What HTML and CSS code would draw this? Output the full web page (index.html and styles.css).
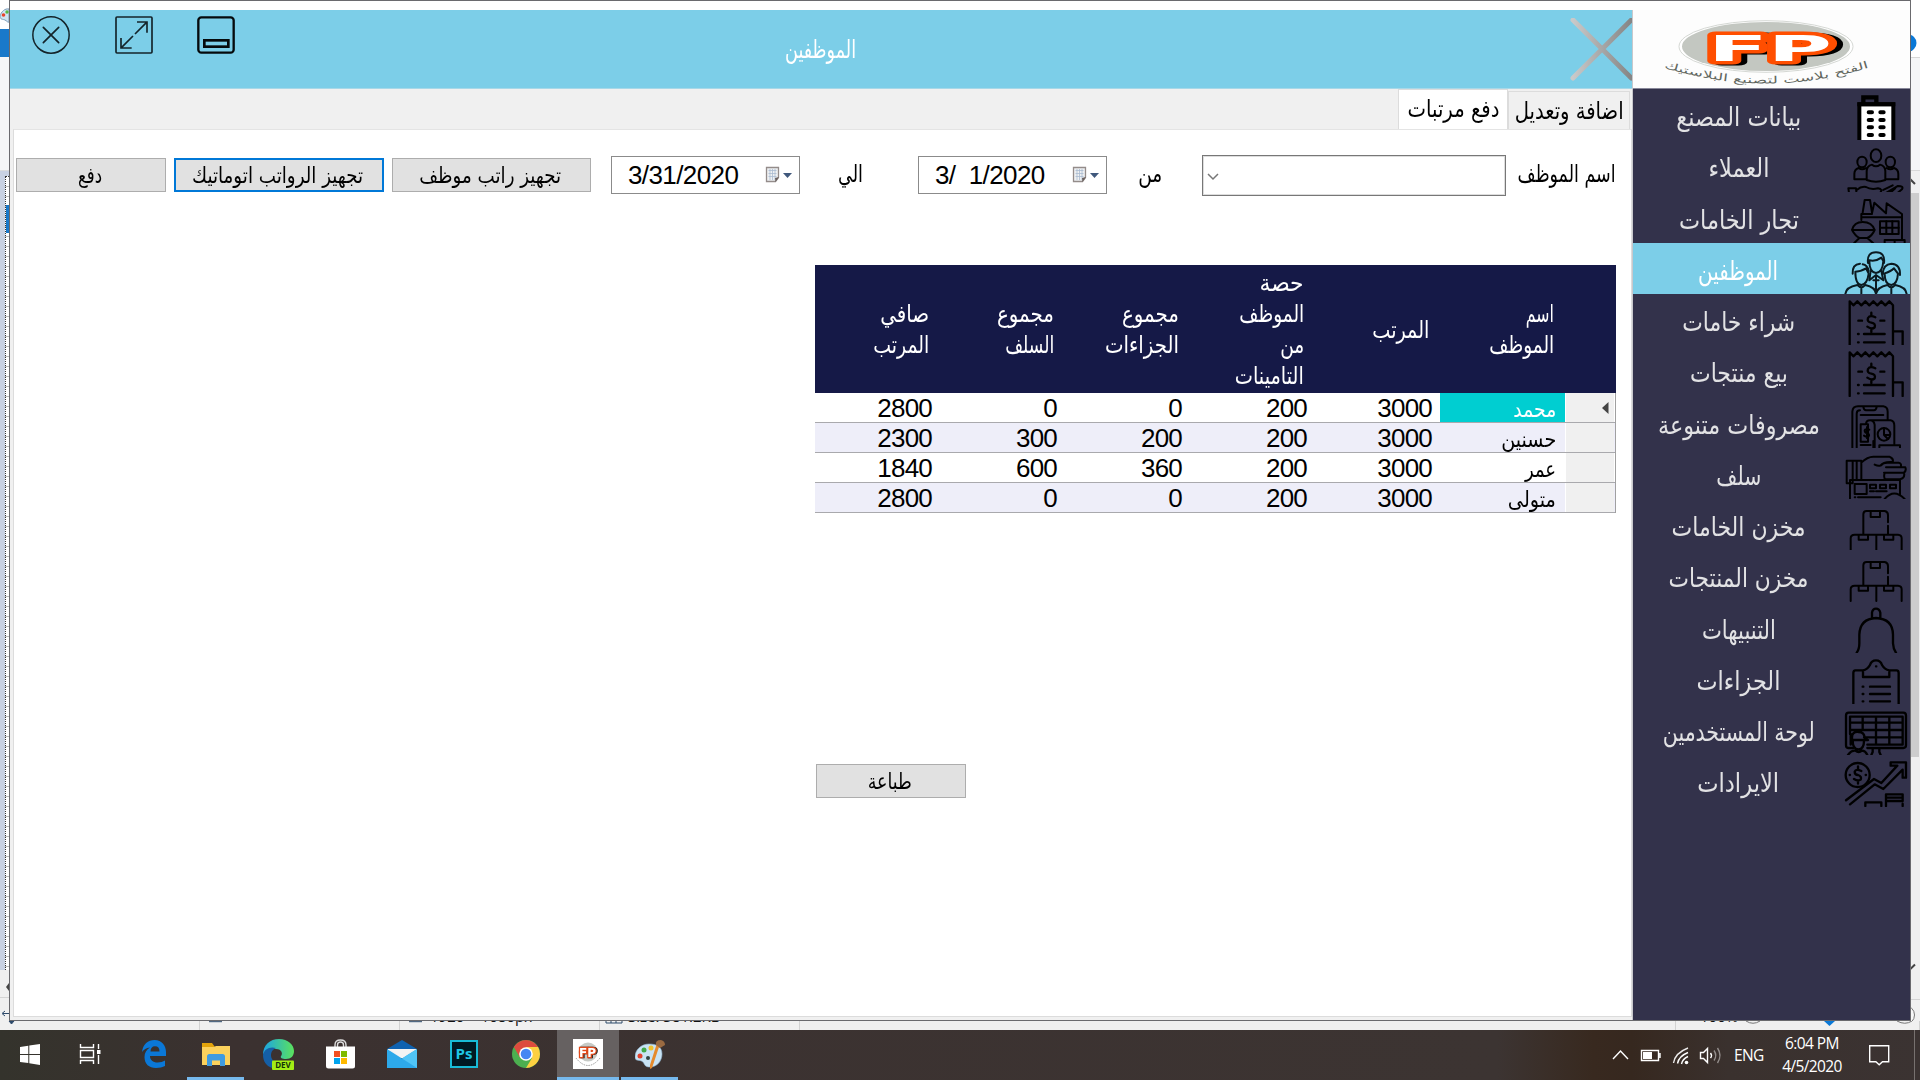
FILE: index.html
```html
<!DOCTYPE html>
<html lang="ar">
<head>
<meta charset="utf-8">
<title>الموظفين</title>
<link rel="stylesheet" href="styles.css">
</head>
<body>
<div class="desktop">
  <div class="sliver left">
    <div class="s-title"><svg width="9" height="28" viewBox="0 0 9 28"><path d="M9 9C5 8 1 12 0 16c0 4 3 3 5 4s3 3 4 2z" fill="#cfe4f2" stroke="#7d9cb8"/><circle cx="3.5" cy="15" r="1.8" fill="#e8442c"/><circle cx="7" cy="12" r="1.7" fill="#57b947"/></svg></div>
    <div class="s-file"></div>
    <div class="s-ribbon"></div>
    <div class="s-canvas"><div class="s-paper"><div class="s-paperblue"></div></div></div>
    <div class="s-foot"><svg width="9" height="51" viewBox="0 0 9 51"><path d="M6 17l3-4v8z" fill="#444"/><path d="M0 27.500h9" stroke="#d4d4d4"/><path d="M3 43.500h6M5 41l-3 2.500 3 2.500" stroke="#2d4a6b" fill="none"/></svg></div>
  </div>

  <div class="window">
    <div class="main">
      <header class="titlebar">
        <div class="winbtns">
          <svg width="38" height="38" viewBox="0 0 114 114"><circle cx="57" cy="57" r="54.500" fill="none" stroke="#14242a" stroke-width="4.500"/><path d="M34 34l46 46M80 34L34 80" stroke="#14242a" stroke-width="5" stroke-linecap="round"/></svg>
          <svg width="38" height="38" viewBox="0 0 114 114"><rect x="3" y="3" width="108" height="108" rx="3" fill="none" stroke="#14242a" stroke-width="5"/><path d="M66 18h30v32M94 20L60 54M18 66v30h32M20 94l34-34" fill="none" stroke="#14242a" stroke-width="5"/></svg>
          <svg width="38" height="38" viewBox="0 0 114 114"><rect x="4" y="4" width="106" height="106" rx="9" fill="none" stroke="#050a0c" stroke-width="7"/><rect x="22" y="73" width="72" height="19" fill="none" stroke="#050a0c" stroke-width="8"/></svg>
        </div>
        <h1 class="title"><span class="t" data-w="71">الموظفين</span></h1>
        <svg class="bigx" width="62" height="63" viewBox="0 0 186 189"><defs><linearGradient id="gx" x1="0" x2="1"><stop offset="0" stop-color="#c9c9c9"/><stop offset="1" stop-color="#858585"/></linearGradient></defs><path d="M9 6L184 180M184 6L9 180" stroke="url(#gx)" stroke-width="15" stroke-linecap="round"/></svg>
      </header>
      <div class="tabs">
        <div class="tab on"><span class="t" data-w="92">دفع مرتبات</span></div>
        <div class="tab"><span class="t" data-w="109">اضافة وتعديل</span></div>
      </div>
      <section class="page">
        <div class="toolbar">
          <button class="btn b-pay"><span class="t" data-w="24">دفع</span></button>
          <button class="btn b-auto"><span class="t" data-w="171">تجهيز الرواتب اتوماتيك</span></button>
          <button class="btn b-one"><span class="t" data-w="142">تجهيز راتب موظف</span></button>
          <div class="date"><span>3/31/2020</span>
            <svg width="28" height="18" viewBox="0 0 28 18"><path d="M1.500 1.500h12v10l-3 4h-9z" fill="#eef0f2" stroke="#948c8a" stroke-width="1.300"/><path d="M3.500 4.500h8M3.500 7.500h8M3.500 10.500h8M5 3v11M7.500 3v11M10 3v11" stroke="#aabbd0" stroke-width=".8"/><path d="M10 12l4-1-3.500 5z" fill="#6b6260"/><path d="M18 7h9l-4.500 5z" fill="#40587c"/></svg></div>
          <span class="lbl l-to"><span class="t" data-w="25">الي</span></span>
          <div class="date"><span>3/&nbsp; 1/2020</span>
            <svg width="28" height="18" viewBox="0 0 28 18"><path d="M1.500 1.500h12v10l-3 4h-9z" fill="#eef0f2" stroke="#948c8a" stroke-width="1.300"/><path d="M3.500 4.500h8M3.500 7.500h8M3.500 10.500h8M5 3v11M7.500 3v11M10 3v11" stroke="#aabbd0" stroke-width=".8"/><path d="M10 12l4-1-3.500 5z" fill="#6b6260"/><path d="M18 7h9l-4.500 5z" fill="#40587c"/></svg></div>
          <span class="lbl l-from"><span class="t" data-w="24">من</span></span>
          <div class="combo"><svg width="12" height="8" viewBox="0 0 12 8"><path d="M1 1l5 5 5-5" fill="none" stroke="#777" stroke-width="1.500"/></svg></div>
          <span class="lbl l-name"><span class="t" data-w="98">اسم الموظف</span></span>
        </div>

        <div class="grid">
          <div class="ghead">
            <div><span class="t" data-w="49">صافي</span><span class="t" data-w="56">المرتب</span></div>
            <div><span class="t" data-w="57">مجموع</span><span class="t" data-w="49">السلف</span></div>
            <div><span class="t" data-w="57">مجموع</span><span class="t" data-w="74">الجزاءات</span></div>
            <div><span class="t" data-w="44">حصة</span><span class="t" data-w="65">الموظف</span><span class="t" data-w="24">من</span><span class="t" data-w="69">التامينات</span></div>
            <div><span class="t" data-w="57">المرتب</span></div>
            <div><span class="t" data-w="28">اسم</span><span class="t" data-w="65">الموظف</span></div>
            <div></div>
          </div>
          <div class="grow"><b>2800</b><b>0</b><b>0</b><b>200</b><b>3000</b><div class="name sel"><span class="t" data-w="43">محمد</span></div><i><svg width="7" height="12" viewBox="0 0 7 12"><path d="M6.500 0v12L0 6z" fill="#444"/></svg></i></div>
          <div class="grow alt"><b>2300</b><b>300</b><b>200</b><b>200</b><b>3000</b><div class="name"><span class="t" data-w="55">حسنين</span></div><i></i></div>
          <div class="grow"><b>1840</b><b>600</b><b>360</b><b>200</b><b>3000</b><div class="name"><span class="t" data-w="31">عمر</span></div><i></i></div>
          <div class="grow alt"><b>2800</b><b>0</b><b>0</b><b>200</b><b>3000</b><div class="name"><span class="t" data-w="48">متولى</span></div><i></i></div>
        </div>
        <button class="btn b-print"><span class="t" data-w="44">طباعة</span></button>
      </section>
    </div>

    <aside class="side">
      <div class="logo">
        <svg width="277" height="78" viewBox="0 0 277 78">
          <ellipse cx="133" cy="36.500" rx="87" ry="25.800" fill="#fff" stroke="#d5d8d4"/>
          <ellipse cx="133" cy="36.500" rx="84" ry="24.500" fill="#c3c7c1"/>
          <text class="fp" x="75" y="50.500" textLength="124" lengthAdjust="spacingAndGlyphs">FP</text>
          <path id="arc" d="M29 57Q133 90 238 57" fill="none"/>
          <text class="arc" direction="rtl"><textPath href="#arc" startOffset="50%" text-anchor="middle" textLength="208" lengthAdjust="spacingAndGlyphs">الفتح بلاست لتصنيع البلاستيك</textPath></text>
        </svg>
      </div>
      <nav class="menu">
        <div class="item"><span class="t" data-w="125">بيانات المصنع</span>
          <svg viewBox="0 0 192 154"><path d="M46 153V46H148V153" fill="#fff" stroke="#000" stroke-width="12"/><path d="M40 46H154" stroke="#000" stroke-width="12"/><path d="M58 44V25H97V44" fill="none" stroke="#000" stroke-width="13"/><path d="M74 70h10M74 93h10M74 115h10M74 138h10M109 70h10M109 93h10M109 115h10M109 138h10" stroke="#000" stroke-width="12" stroke-linecap="round"/></svg></div>
        <div class="item"><span class="t" data-w="61">العملاء</span>
          <svg class="ln" viewBox="0 0 192 154"><ellipse cx="96" cy="47" rx="16" ry="19"/><ellipse cx="54" cy="66" rx="14" ry="16"/><ellipse cx="139" cy="66" rx="14" ry="16"/><path d="M68 120V94Q68 78 84 74Q96 84 108 74Q124 78 124 94V120Q96 130 68 120ZM66 118H31V102Q31 88 44 84Q54 92 66 84M126 118H163V102Q163 88 150 84Q139 92 128 84"/><path d="M16 166L13 145H36L38 166M38 150Q52 138 66 141Q80 150 102 145Q118 148 108 159H76M108 159H126L162 138Q180 138 174 148L152 166M118 150L146 136M130 166L154 145"/></svg></div>
        <div class="item"><span class="t" data-w="120">تجار الخامات</span>
          <svg class="ln" viewBox="0 0 192 154"><path d="M56 62L62 24H78L84 62M84 64L91 32 126 64 128 34 174 66V140M52 84V66H84M52 76H174V142"/><rect x="108" y="88" width="56" height="38"/><path d="M127 88v38M145 88v38M108 107h56M24 114Q30 90 56 90Q84 90 92 114ZM24 114Q34 132 46 138H70Q84 132 92 114M46 138L30 154M70 138L88 154M122 154V144H182V154M152 144v10"/></svg></div>
        <div class="item on"><span class="t" data-w="80">الموظفين</span>
          <svg class="ln" viewBox="0 0 192 154"><path d="M72 60Q68 28 96 28Q124 28 120 60M76 52Q96 56 112 44L118 54M76 54Q76 88 96 90Q116 88 118 54M80 84L76 112 96 96 118 112 112 84"/><path d="M26 92Q24 64 48 62M56 64Q70 66 74 84M34 86Q54 84 66 76L74 92M34 86Q34 124 52 126Q70 124 74 92M116 92Q118 64 142 62Q170 64 168 96M120 92Q140 86 150 76L162 92M122 92Q122 124 142 126Q160 124 162 92"/><path d="M4 153Q6 132 40 126Q52 140 64 126Q94 132 96 153Q100 132 130 126Q142 140 154 126Q186 132 188 153M52 136v17M142 136v17M96 98v50M88 112h16"/></svg></div>
        <div class="item"><span class="t" data-w="113">شراء خامات</span>
          <svg class="ln rc" viewBox="0 0 192 154"><path d="M17 153V22L28 34 40 22 52 34 64 22 76 34 88 22 100 34 112 22 124 34 136 22 147 34V153M147 112H176V153"/><path d="M94 70Q78 62 72 72Q68 84 82 86Q96 88 92 100Q84 108 70 98M82 56V66M82 104V114M43 80H54M109 80H121M42 120h2M60 120H122M42 145h2M60 145H122"/></svg></div>
        <div class="item"><span class="t" data-w="98">بيع منتجات</span>
          <svg class="ln rc" viewBox="0 0 192 154"><path d="M17 153V22L28 34 40 22 52 34 64 22 76 34 88 22 100 34 112 22 124 34 136 22 147 34V153M147 112H176V153"/><path d="M94 70Q78 62 72 72Q68 84 82 86Q96 88 92 100Q84 108 70 98M82 56V66M82 104V114M43 80H54M109 80H121M42 120h2M60 120H122M42 145h2M60 145H122"/></svg></div>
        <div class="item"><span class="t" data-w="162">مصروفات متنوعة</span>
          <svg class="ln" viewBox="0 0 192 154"><path d="M25 152V44Q26 28 42 28H118Q131 30 131 44V68M38 152V50Q38 40 48 40M58 30Q60 40 66 40H90Q96 40 98 30M50 54H118M50 82H72M72 82V134H50V82M50 144H80M92 152V84Q90 70 78 70Q66 70 66 82M78 70H140Q151 72 151 86V142"/><path d="M76 98Q64 94 62 100Q62 108 69 108Q78 112 74 118Q68 122 60 116M69 90v34"/><circle cx="120" cy="112" r="19"/><path d="M120 94V114H138M120 114L132 126M106 152V145H168V152M88 152v-20"/></svg></div>
        <div class="item"><span class="t" data-w="45">سلف</span>
          <svg class="ln" viewBox="0 0 192 154"><path d="M8 38H26V106H8ZM26 38H52V94M38 38V94M52 44Q70 26 88 26H136Q150 32 146 42Q118 40 110 52Q104 56 92 50M112 52Q116 44 130 44H164Q174 46 170 58H184Q188 68 180 74H120M126 58H178M180 74Q184 90 168 94H124Q118 90 122 74M18 153V96H168V140"/><rect x="32" y="108" width="36" height="30"/><path d="M78 110h18v11H78zM108 110h18v11h-18zM138 110h18v11h-18zM78 130H90M96 130H128M32 148h2M42 148H110M122 153Q150 120 182 153"/></svg></div>
        <div class="item"><span class="t" data-w="134">مخزن الخامات</span>
          <svg class="ln" viewBox="0 0 192 154"><path d="M58 106V46Q58 36 68 36H122Q132 38 132 48V70M132 80V104M80 38V54H108V38M20 153V118Q20 107 32 107H162Q173 108 173 118V153M97 108V153M44 108V122H72V108M120 108V122H148V108"/></svg></div>
        <div class="item"><span class="t" data-w="140">مخزن المنتجات</span>
          <svg class="ln" viewBox="0 0 192 154"><path d="M58 106V46Q58 36 68 36H122Q132 38 132 48V70M132 80V104M80 38V54H108V38M20 153V118Q20 107 32 107H162Q173 108 173 118V153M97 108V153M44 108V122H72V108M120 108V122H148V108"/></svg></div>
        <div class="item"><span class="t" data-w="74">التنبيهات</span>
          <svg class="ln wide" viewBox="0 0 192 154"><path d="M84 50V32Q86 20 96 20Q106 20 109 32V50M38 152Q46 142 46 124V98Q48 50 96 48Q146 50 147 98V124Q148 142 156 152"/></svg></div>
        <div class="item"><span class="t" data-w="84">الجزاءات</span>
          <svg class="ln wide" viewBox="0 0 192 154"><path d="M57 52H34Q28 52 28 60V152M136 52H158Q164 52 164 60V152M57 72V52Q70 50 78 36Q82 22 96 22Q110 22 114 36Q122 50 136 52V72ZM96 40h1M56 101h2M78 101H138M56 123h2M78 123H138M56 145h2M78 145H138"/></svg></div>
        <div class="item"><span class="t" data-w="152">لوحة المستخدمين</span>
          <svg class="ln wide" viewBox="0 0 192 154"><path d="M28 132H12Q6 132 6 124V34Q6 26 14 26H178Q186 26 186 34V124Q186 132 178 132H70"/><path d="M18 90V38H176V122H70M18 56H176M18 78H176M60 100H176M56 38V78M96 38V120M136 38V120M20 90V122M24 100Q24 82 44 84Q62 84 62 104L72 108H24ZM26 108Q26 136 43 136Q60 136 60 110M12 153Q22 138 34 140Q44 148 54 140Q64 140 70 153M86 136V144L82 153M106 136V144L110 153"/></svg></div>
        <div class="item"><span class="t" data-w="82">الايرادات</span>
          <svg class="ln wide" viewBox="0 0 192 154"><circle cx="41" cy="60" r="36"/><path d="M52 48Q36 40 32 50Q32 60 42 60Q54 64 50 74Q42 80 30 72M42 34v8M42 78v8M17 60h1M65 60h1M6 136L90 72 112 84 160 32H140V22H186V68H176V44L118 102 92 88 18 148M64 153V142H112V153M126 153V118H176V138H128M128 128H174M176 146v7"/></svg></div>
      </nav>
    </aside>
  </div>

  <div class="sliver right">
    <svg width="9" height="57" viewBox="0 0 9 57"><circle cx="-3" cy="43" r="8.500" fill="#0a78d6"/></svg>
    <div class="r-ribbon"></div>
    <svg width="9" height="22" viewBox="0 0 9 22"><path d="M-4 13l4-4 4 4" fill="none" stroke="#444" stroke-width="2"/></svg>
    <div class="r-thumb"></div>
    <div class="r-track"></div>
    <svg width="9" height="60" viewBox="0 0 9 60"><path d="M-4 4l4 3.500 4-4" fill="none" stroke="#444" stroke-width="2"/><path d="M0 38.500h9" stroke="#d4d4d4"/><circle cx="-6" cy="54" r="9.500" fill="#f8f8f8" stroke="#777"/></svg>
  </div>

  <div class="status">
    <svg width="1920" height="9" viewBox="0 0 1920 9"><path d="M199.500 0v9M399.500 0v9M599.500 0v9M799.500 0v9M1675.500 0v9M1919.500 0v9" stroke="#d2d2d2"/><path d="M9 0h5l-2.500 3zM209 .7h13M409 .7h13" stroke="#2d4a6b" fill="#2d4a6b"/><path d="M606 0v2h16V0M611 0v2M616 0v2" stroke="#2d4a6b" fill="none"/><text x="430" y="1">1920 × 1080px</text><text x="628" y="1">Size: 381.2KB</text><text x="1700" y="1">100%</text><path d="M1746 0q7 4.500 14 0M1897 0q8 4.500 15 0" fill="none" stroke="#777"/><path d="M1824 0h11l-5.500 5z" fill="#0a78d6"/></svg>
  </div>

  <footer class="taskbar">
    <div class="tk start"><svg width="20" height="21" viewBox="0 0 20 21"><path d="M0 3l8.300-1.200V10H0zM9.300 1.600L20 0v10H9.300zM0 11h8.300v8L0 17.900zM9.300 11H20v10L9.300 19.300z" fill="#fff"/></svg></div>
    <div class="tk tv"><svg width="22" height="20" viewBox="0 0 22 20"><path d="M1.500 0v3.500h13V0M1.500 20v-3.500h13V20M1.500 6.500h13v7h-13zM19.500 0v5M19.500 11v9" fill="none" stroke="#fff" stroke-width="1.400"/><path d="M18 6h3.500v4H18z" fill="#fff"/></svg></div>
    <div class="tk"><svg width="26" height="28" viewBox="0 0 26 28"><path d="M1 12C2 4 7 0 13.500 0 21 0 25 6 25 12v4H9c0 4 3 6.500 7.500 6.500 3 0 5.500-1 7.500-2v5.500c-2.500 1.300-5.500 2-9 2C8 28 3.500 24 3.500 17c0-4 2-7.500 5.500-9.500C5 8 3 9.500 1 12zm8.500-.5h9C18.500 8 17 6.300 14 6.300s-4.300 2-4.500 5.200z" fill="#0b78d7"/></svg></div>
    <div class="tk line"><svg width="28" height="24" viewBox="0 0 28 24"><path d="M0 1h10l3 4h14v6H0z" fill="#e2a30b"/><path d="M0 5h12l2-1h14v19H0z" fill="#fbd15c"/><path d="M5 24V14.500q0-2.500 2.500-2.500h13q2.500 0 2.500 2.500V24h-5v-5.500h-8V24z" fill="#3f9be0"/></svg></div>
    <div class="tk"><svg width="31" height="31" viewBox="0 0 31 31"><defs><linearGradient id="ed" x1="0" x2="1"><stop offset="0" stop-color="#1ba4e4"/><stop offset="1" stop-color="#5be25d"/></linearGradient></defs><path d="M0 16C0 6 7 0 16 0c9 0 15 6 15 12 0 5-3 8-8 8-4 0-6-1-5-3 2-2 1-7-5-7C7 10 2 12 0 16z" fill="url(#ed)"/><path d="M0 16c1-6 7-9 13-7-5 2-6 7-4 11 2 4 6 6 12 5-4 5-9 5.500-12 4C3 27 0 22 0 16z" fill="#155fa6"/><rect x="9" y="21.500" width="22" height="9.500" rx="1" fill="#a4ed15"/><text x="20" y="29.300" class="dev">DEV</text></svg></div>
    <div class="tk"><svg width="29" height="30" viewBox="0 0 29 30"><path d="M9 9V6q0-5 5.500-5T20 6v3M11.500 9V6q0-3 3-3t3 3v3" fill="none" stroke="#ddd" stroke-width="1.400"/><path d="M0 7.500h29V27q0 2.500-2.500 2.500h-24Q0 29.500 0 27z" fill="#fff"/><path d="M8 12h6v6H8z" fill="#f25022"/><path d="M15 12h6v6h-6z" fill="#7fba00"/><path d="M8 19h6v6H8z" fill="#00a4ef"/><path d="M15 19h6v6h-6z" fill="#ffb900"/></svg></div>
    <div class="tk"><svg width="30" height="28" viewBox="0 0 30 28"><path d="M0 9L15 0l15 9z" fill="#0f62b0"/><path d="M1 9h28v9H1z" fill="#f1f1f1"/><path d="M0 9l15 9.500L30 9v19H0z" fill="#2da9ea"/><path d="M30 9v19L15 18.500z" fill="#50c4f6"/><path d="M3 9h24l-12 9z" fill="#f4f4f4"/></svg></div>
    <div class="tk"><svg width="28" height="28" viewBox="0 0 28 28"><rect x="1" y="1" width="26" height="26" fill="#001a24" stroke="#18bcd8" stroke-width="2"/><text x="14" y="19" class="ps">Ps</text></svg></div>
    <div class="tk"><svg width="28" height="28" viewBox="0 0 28 28"><circle cx="14" cy="14" r="14" fill="#4caf50"/><path d="M14 14L1.900 7A14 14 0 0 1 26.100 7z" fill="#dd4b3e"/><path d="M14 7H26.100A14 14 0 0 1 14 28l6-10z" fill="#fdd041"/><path d="M1.900 7l6 10.500L14 7z" fill="#dd4b3e"/><circle cx="14" cy="14" r="6.800" fill="#fff"/><circle cx="14" cy="14" r="5.300" fill="#4487f3"/></svg></div>
    <div class="tk line active"><svg width="30" height="30" viewBox="0 0 30 30"><path d="M0 0h30v30H0z" fill="#fff"/><circle cx="15" cy="13" r="9.500" fill="#c6cac6"/><text x="14.500" y="17.500" class="fpi">FP</text><path d="M3 19q12 15 24 0" fill="none" stroke="#999" stroke-dasharray="1.500 1"/></svg></div>
    <div class="tk line pnt"><svg width="30" height="29" viewBox="0 0 30 29"><path d="M14 4C6 4 0 10 0 17c0 5 5 2 8 5 2 3 2 5 7 5 7 0 12-6 12-13S22 4 14 4z" fill="#c9e3f4" stroke="#8fb4cf" stroke-width=".6"/><circle cx="5" cy="16" r="2.500" fill="#e0412d"/><circle cx="9" cy="10" r="2.500" fill="#43a84a"/><circle cx="16" cy="8" r="2.500" fill="#f0c330"/><circle cx="13" cy="18" r="2" fill="#344"/><path d="M25 4l-8 24-2 1 0-4L22 3z" fill="#e58a2c"/><path d="M21 5q-1-5 5-5 4 1 4 5l-5 3z" fill="#9a6a41"/></svg></div>
    <div class="tray">
      <svg width="146" height="24" viewBox="0 0 146 24"><g fill="none" stroke="#fff" stroke-width="1.400"><path d="M1 16l7.500-8 7.500 8"/><path d="M29.500 7.500h17v10h-17zM48 10v5"/><path d="M61.500 20Q63 10 76 5" opacity=".9"/><path d="M65.500 20.500Q67 13 76 9.500M69.500 21Q70.500 16 76 13.500"/><path d="M88.500 9.500h3l4-4v14l-4-4h-3z"/><path d="M98.500 10q2 2.500 0 5"/><path d="M102 7.500q3.500 5 0 10M105.500 5q5 7.500 0 15" opacity=".45"/></g><path d="M31 9h9v7h-9z" fill="#fff"/><circle cx="74.500" cy="19.500" r="1.800" fill="#fff"/></svg>
      <span class="eng">ENG</span>
      <span class="clock">6:04 PM<br>4/5/2020</span>
      <svg class="note" width="21" height="22" viewBox="0 0 21 22"><path d="M.7 1.700h19v16h-6.200l-3.300 3-3.300-3H.7z" fill="none" stroke="#fff" stroke-width="1.400"/></svg>
      <div class="peek"></div>
    </div>
  </footer>
</div>
<script src="fit.js"></script>
</body>
</html>
```
FILE: styles.css
```css
* { box-sizing: border-box; }
body { margin: 0; background: #fff; font-family: "DejaVu Sans", sans-serif; overflow: hidden; }
svg { display: block; flex: none; }
.desktop { width: 1920px; height: 1080px; display: grid; grid-template-columns: 9px 1902px 9px; grid-template-rows: 1021px 9px 50px; }

/* condensed Arabic labels: the inner span is squeezed to the width in data-w */
.t { display: inline-block; direction: rtl; white-space: nowrap; text-align: right; }
.t > span { display: inline-block; transform-origin: 100% 50%; }

/* edges of the paint window behind */
.sliver { overflow: hidden; display: flex; flex-direction: column; }
.s-title { height: 29px; background: #fff; }
.s-file { height: 28px; background: #1979ca; }
.s-ribbon { height: 114px; background: #f5f6f7; border-bottom: 1px solid #dadbdc; }
.s-canvas { height: 799px; background: #c8d1e2; padding: 5px 0 0 5px; }
.s-paper { height: 100%; background: repeating-linear-gradient(#fff 0 9px, #bbb 9px 10px); border-left: 1px dotted #333; border-top: 1px dotted #333; padding-top: 28px; }
.s-paperblue { height: 28px; background: #1979ca; }
.s-foot { height: 51px; background: #f0f0f0; }
.right { background: #f0f0f0; }
.right svg:first-child { background: #fff; }
.r-ribbon { height: 114px; background: #f5f6f7; border: solid #d8d8d8; border-width: 1px 0; }
.r-thumb { height: 564px; background: #cdcdcd; margin-right: 1px; }
.r-track { flex: 1; }

.window { border: 1px solid #6a6a6e; display: grid; grid-template-columns: 1623px 277px; background: #fff; padding-top: 9px; overflow: hidden; }
.main { display: flex; flex-direction: column; background: #f0f0f0; border-right: 1px solid #c8c8cc; }
.titlebar { height: 79px; background: #7ccee8; border-bottom: 1px solid #a8d8e8; display: flex; align-items: flex-start; padding-left: 22px; }
.winbtns { display: flex; gap: 44.500px; padding-top: 6px; width: 400px; }
.title { margin: 0 0 0 289px; font-weight: 400; font-size: 25px; line-height: 40px; color: #fff; padding-top: 20px; width: 200px; text-align: center; }
.bigx { margin: 8px 0 0 auto; }
.tabs { height: 40px; display: flex; justify-content: flex-end; align-items: flex-end; padding-right: 2px; font-size: 24px; color: #000; }
.tab { width: 122px; height: 38px; border: 1px solid #dcdcdc; border-bottom: 0; line-height: 39px; text-align: center; background: #f0f0f0; }
.tab.on { width: 110px; height: 40px; background: #fff; line-height: 39px; }
.page { flex: 1; margin: 0 0 3px 3px; background: #fff; border: 1px solid #dcdcdc; border-top-color: #e4e4e4; display: flex; flex-direction: column; align-items: flex-start; }

.toolbar { height: 44px; margin: 23px 0 0 2px; display: flex; align-items: center; color: #000; }
.btn { border: 1px solid #adadad; background: #e1e1e1; height: 34px; padding: 0; font: 22px/30px "DejaVu Sans", sans-serif; color: #000; overflow: hidden; flex: none; padding-top: 2px; }
.btn .t { margin-left: -2px; }
.b-pay { width: 150px; }
.b-auto { width: 210px; margin-left: 8px; border: 2px solid #0078d7; padding-top: 1px; }
.b-one { width: 199px; margin-left: 8px; }
.date { width: 189px; height: 38px; border: 1px solid #8b8b8b; margin-left: 20px; display: flex; align-items: center; justify-content: space-between; padding: 0 6px 0 16px; font: 26px/36px "Liberation Sans", Arial, sans-serif; letter-spacing: -.600px; }
.lbl { font-size: 24px; line-height: 34px; height: 36px; }
.l-to { margin-left: 38px; }
.l-to + .date { margin-left: 55px; }
.l-from { margin-left: 31px; }
.combo { width: 304px; height: 41px; border: 1px solid #777; outline: 1px solid #ddd; outline-offset: -2px; margin-left: 40px; padding: 17px 4px; }
.l-name { margin-left: 12px; }

.grid { width: 801px; margin: 68px 0 0 801px; border-right: 1px solid #a0a0a0; }
.ghead { height: 128px; width: 801px; background: #151947; color: #fff; display: grid; grid-template-columns: repeat(6, 125px) 51px; font-size: 24px; line-height: 31px; padding-top: 2px; }
.ghead div { display: flex; flex-direction: column; justify-content: center; align-items: flex-end; padding-right: 11px; }
.grow { height: 30px; display: grid; grid-template-columns: repeat(6, 125px) 50px; background: #fff; border-bottom: 1px solid #a9a9ad; overflow: hidden; color: #000; }
.grow.alt { background: #eeeef9; }
.grow b { font: 26px/31px "Liberation Sans", Arial, sans-serif; text-align: right; padding-right: 8px; letter-spacing: -.800px; }
.name { font-size: 22px; line-height: 34px; text-align: right; padding-right: 9px; height: 29px; overflow: hidden; }
.sel { background: #00ced1; color: #fff; }
.grow i { background: #f0f0f0; display: flex; justify-content: flex-end; padding: 9px 5px 0 0; margin-right: 1px; border-left: 1px solid #fff; }
.b-print { margin: 251px 0 0 802px; width: 150px; }

.side { background: #33324b; display: flex; flex-direction: column; }
.logo { height: 78px; background: #fdfdfd; }
.fp { font: 700 35px "DejaVu Sans", sans-serif; fill: #fff; stroke: #ff4e00; stroke-width: 7; paint-order: stroke; stroke-linejoin: round; filter: drop-shadow(6px 1.500px 0 #000); }
.arc { font: 10px "DejaVu Sans", sans-serif; fill: #62675f; }
.menu { border-top: 1px solid #88889a; display: grid; grid-auto-rows: 51.250px; }
.item { display: grid; grid-template-columns: 211px 64px; font-size: 26px; line-height: 56px; color: #e2e2e4; justify-items: center; overflow: hidden; }
.item.on { background: #7ccee8; color: #fff; }
.item svg { width: 64px; height: 51.300px; }
.ln { fill: none; stroke: #000; stroke-width: 6; stroke-linecap: round; stroke-linejoin: round; }
.on .ln { stroke: #0b1a20; }
.rc, .wide { stroke-width: 7; }

.status { grid-column: 1 / 4; background: #f0f0f0; overflow: hidden; }
.status text { font: 15px "Open Sans", sans-serif; fill: #111; }
.taskbar { grid-column: 1 / 4; display: flex; background: linear-gradient(90deg, #34332c, #3b3130 12%, #3c3432 78%, #38291f 83%, #36281f 85%, #3a312e 90%, #3b3332); color: #fff; }
.tk { width: 62px; display: flex; align-items: center; justify-content: center; border-bottom: 3px solid transparent; padding-top: 1px; }
.start { width: 60px; }
.tv { width: 63px; padding-right: 4px; }
.line { border-image: linear-gradient(90deg, transparent 5px, #76b9ed 5px 56px, transparent 56px) 3; }
.active { background: #666161; border-image: none; border-color: #76b9ed; }
.dev { font: 700 8px "Open Sans", sans-serif; text-anchor: middle; fill: #14320a; }
.ps { font: 700 15px "Open Sans", sans-serif; text-anchor: middle; fill: #1fc5e4; }
.fpi { font: 700 12px "DejaVu Sans", sans-serif; text-anchor: middle; fill: #fff; stroke: #e24a1b; stroke-width: 2.500; paint-order: stroke; filter: drop-shadow(1px .500px 0 #1a1a1a); }
.tray { flex: 1; display: flex; justify-content: flex-end; align-items: center; font: 15.500px/23px "Open Sans", sans-serif; }
.eng { width: 30px; margin-left: -25px; letter-spacing: -.7px; }
.tray svg:first-child { margin-right: 1px; }
.clock { width: 80px; text-align: center; margin: 0 17px 0 8px; letter-spacing: -.6px; }
.peek { width: 1px; height: 50px; background: #77716f; margin: 0 5px 0 24px; }
```
FILE: fit.js
```js
// Squeezes every label horizontally to the width given in data-w.
document.querySelectorAll('.t[data-w]').forEach(function (el) {
  var inner = document.createElement('span');
  inner.textContent = el.textContent;
  el.textContent = '';
  el.appendChild(inner);
  var natural = inner.getBoundingClientRect().width;
  var target = Number(el.dataset.w);
  el.style.width = target + 'px';
  inner.style.transform = 'scaleX(' + (target / natural) + ')';
});
```
